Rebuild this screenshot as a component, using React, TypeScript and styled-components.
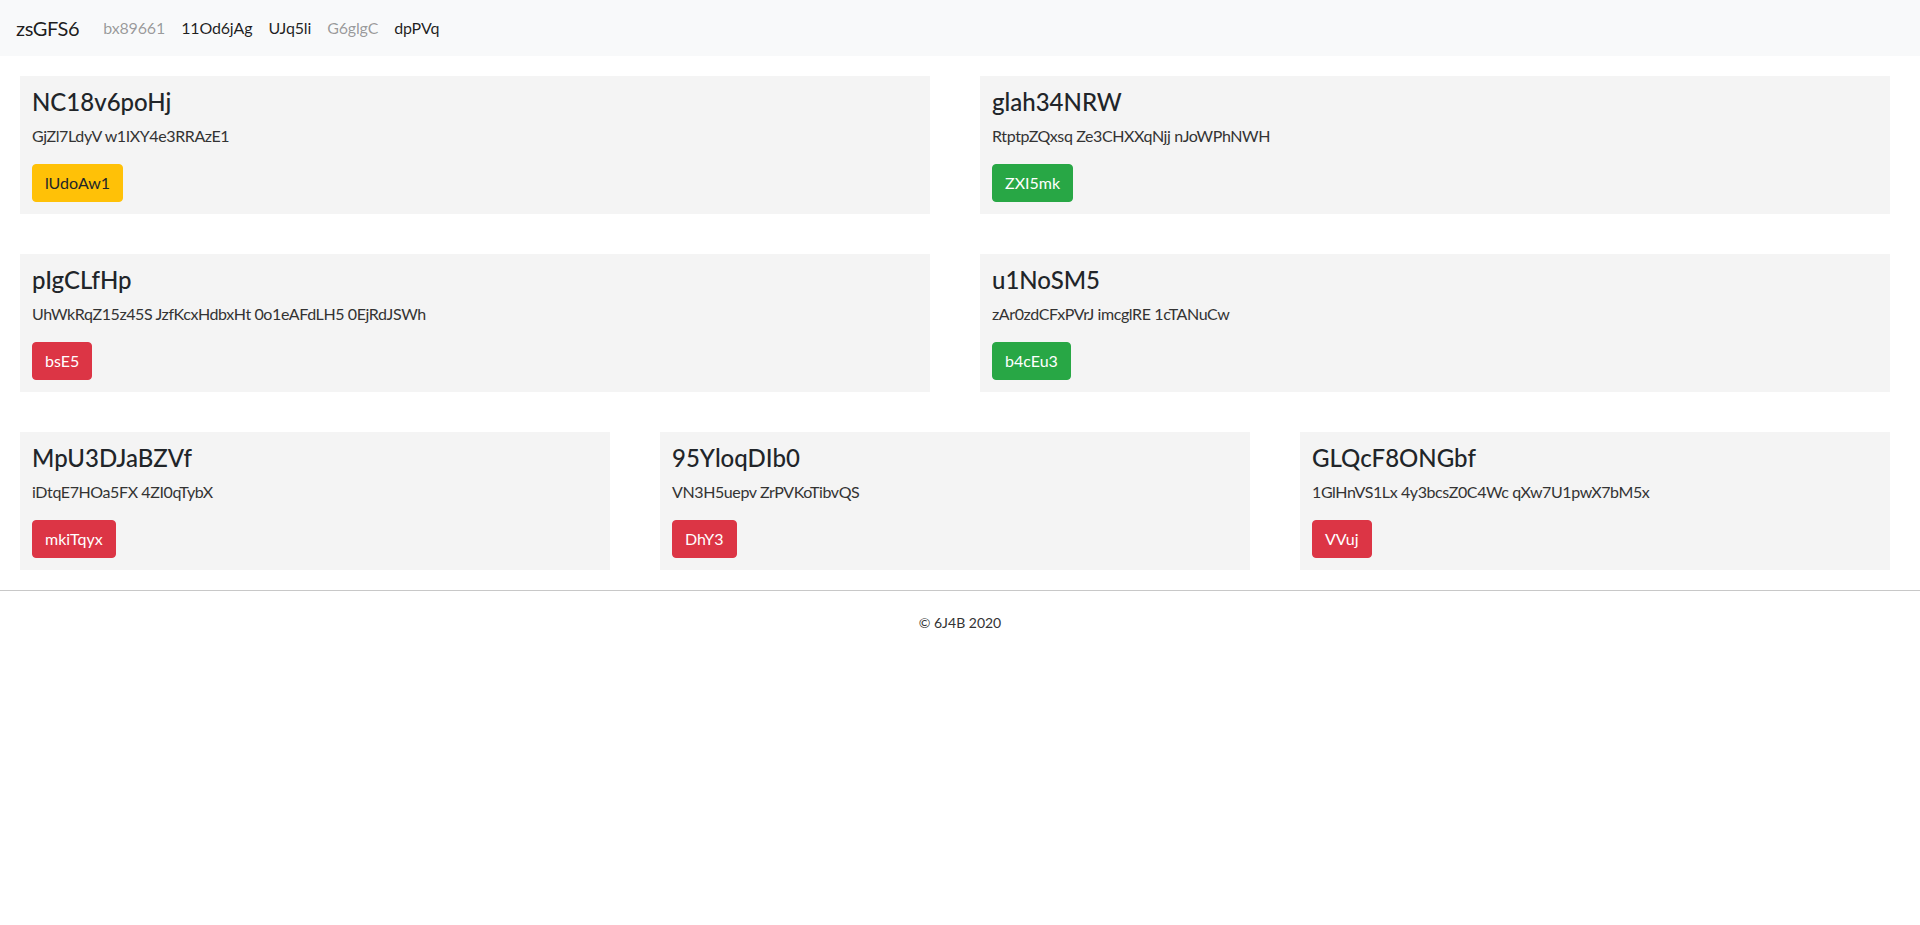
import React from "react";
import styled, { createGlobalStyle } from "styled-components";

const FONT = `"Lato", "Noto Sans", "Liberation Sans", sans-serif`;

const GlobalStyle = createGlobalStyle`
  html, body { margin: 0; padding: 0; background: #fff; }
  body {
    font-family: ${FONT};
    font-size: 16px;
    line-height: 1.5;
    color: #212529;
  }
  * { box-sizing: border-box; }
`;

const NavBar = styled.nav`
  display: flex;
  align-items: center;
  height: 56px;
  padding: 8px 16px;
  background: #f8f9fa;
`;

const Brand = styled.a`
  font-size: 20px;
  line-height: 30px;
  padding: 5px 0;
  margin-right: 16px;
  letter-spacing: -0.4px;
  color: rgba(0, 0, 0, 0.9);
  text-decoration: none;
`;

const NavList = styled.div`
  display: flex;
  align-items: center;
`;

const NavLink = styled.a<{ $muted?: boolean }>`
  padding: 8px;
  font-size: 16px;
  line-height: 24px;
  letter-spacing: -0.15px;
  color: ${(p) => (p.$muted ? "rgba(0,0,0,0.4)" : "rgba(0,0,0,0.88)")};
  text-decoration: none;
`;

const Main = styled.main`
  display: flex;
  flex-direction: column;
  gap: 40px;
  padding: 20px 30px 20px 20px;
`;

const Row = styled.div<{ $cols: number }>`
  display: grid;
  grid-template-columns: repeat(${(p) => p.$cols}, 1fr);
  column-gap: 50px;
`;

const Card = styled.section`
  display: flex;
  flex-direction: column;
  align-items: flex-start;
  background: #f4f4f4;
  padding: 12px;
`;

const Title = styled.h3`
  margin: 0 0 8px;
  font-size: 24px;
  font-weight: 500;
  line-height: 28px;
  color: #212529;
`;

const Text = styled.p`
  margin: 0 0 16px;
  font-size: 16px;
  line-height: 24px;
  letter-spacing: -0.4px;
  color: #333;
`;

const variants = {
  warning: { bg: "#ffc107", fg: "#212529" },
  success: { bg: "#28a745", fg: "#fff" },
  danger: { bg: "#dc3545", fg: "#fff" },
};

type Variant = keyof typeof variants;

const Button = styled.button<{ $v: Variant }>`
  display: block;
  height: 38px;
  padding: 6px 12px;
  font-family: ${FONT};
  font-size: 16px;
  line-height: 24px;
  border: 1px solid ${(p) => variants[p.$v].bg};
  border-radius: 4px;
  background: ${(p) => variants[p.$v].bg};
  color: ${(p) => variants[p.$v].fg};
  cursor: pointer;
`;

const Footer = styled.footer`
  border-top: 1px solid #c8c8c8;
  padding: 20px 0;
  text-align: center;
  font-size: 14px;
  line-height: 24px;
  color: #333;
`;

type CardData = { title: string; text: string; btn: string; v: Variant };

const rows: CardData[][] = [
  [
    { title: "NC18v6poHj", text: "GjZl7LdyV w1IXY4e3RRAzE1", btn: "lUdoAw1", v: "warning" },
    { title: "glah34NRW", text: "RtptpZQxsq Ze3CHXXqNjj nJoWPhNWH", btn: "ZXI5mk", v: "success" },
  ],
  [
    { title: "pIgCLfHp", text: "UhWkRqZ15z45S JzfKcxHdbxHt 0o1eAFdLH5 0EjRdJSWh", btn: "bsE5", v: "danger" },
    { title: "u1NoSM5", text: "zAr0zdCFxPVrJ imcglRE 1cTANuCw", btn: "b4cEu3", v: "success" },
  ],
  [
    { title: "MpU3DJaBZVf", text: "iDtqE7HOa5FX 4ZI0qTybX", btn: "mkiTqyx", v: "danger" },
    { title: "95YloqDIb0", text: "VN3H5uepv ZrPVKoTibvQS", btn: "DhY3", v: "danger" },
    { title: "GLQcF8ONGbf", text: "1GlHnVS1Lx 4y3bcsZ0C4Wc qXw7U1pwX7bM5x", btn: "VVuj", v: "danger" },
  ],
];

const links: { label: string; muted?: boolean }[] = [
  { label: "bx89661", muted: true },
  { label: "11Od6jAg" },
  { label: "UJq5li" },
  { label: "G6glgC", muted: true },
  { label: "dpPVq" },
];

export default function App() {
  return (
    <>
      <GlobalStyle />
      <NavBar>
        <Brand href="#">zsGFS6</Brand>
        <NavList>
          {links.map((l) => (
            <NavLink key={l.label} href="#" $muted={l.muted}>
              {l.label}
            </NavLink>
          ))}
        </NavList>
      </NavBar>
      <Main>
        {rows.map((row, i) => (
          <Row key={i} $cols={row.length}>
            {row.map((c) => (
              <Card key={c.title}>
                <Title>{c.title}</Title>
                <Text>{c.text}</Text>
                <Button $v={c.v}>{c.btn}</Button>
              </Card>
            ))}
          </Row>
        ))}
      </Main>
      <Footer>© 6J4B 2020</Footer>
    </>
  );
}
